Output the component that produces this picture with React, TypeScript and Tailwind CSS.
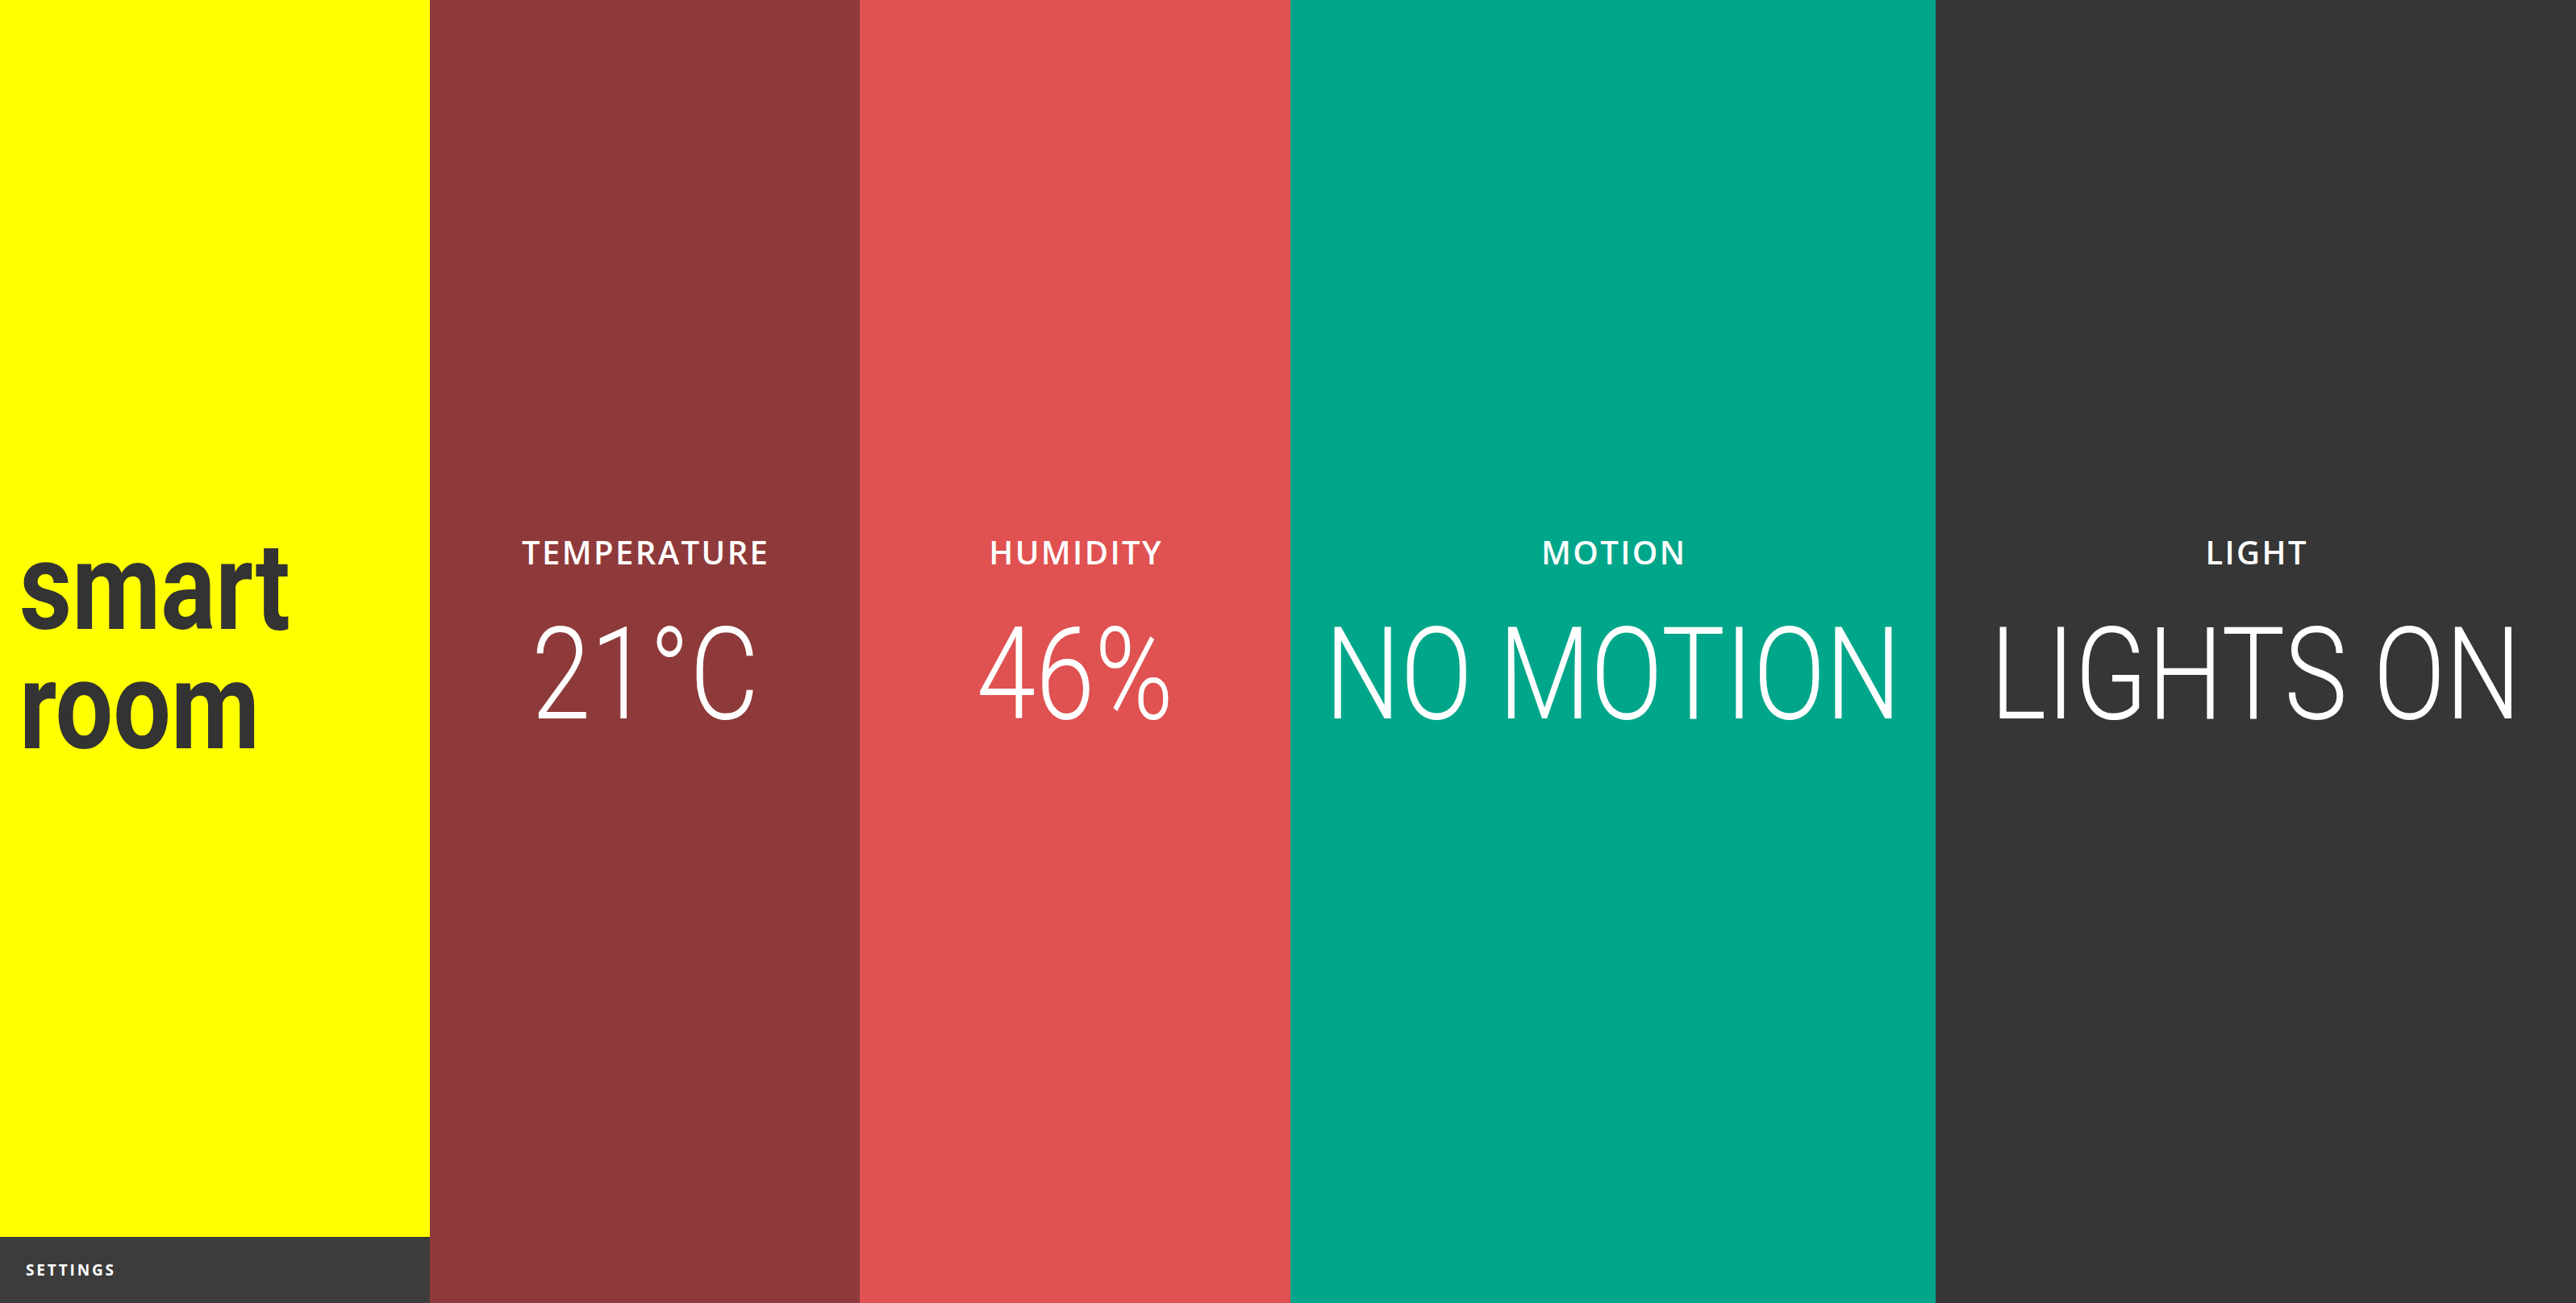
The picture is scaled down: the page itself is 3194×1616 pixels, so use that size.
import React from "react";

type Sensor = {
  label: string;
  value: string;
  width: string;
  bg: string;
};

const SENSORS: Sensor[] = [
  { label: "Temperature", value: "21°C", width: "w-[533px] shrink-0", bg: "bg-[#8e3a3a]" },
  { label: "Humidity", value: "46%", width: "w-[534px] shrink-0", bg: "bg-[#e05151]" },
  { label: "Motion", value: "NO MOTION", width: "w-[800px] shrink-0", bg: "bg-[#00a68a]" },
  { label: "Light", value: "LIGHTS ON", width: "min-w-0 flex-1", bg: "bg-[#363636]" },
];

function SensorColumn({ sensor }: { sensor: Sensor }) {
  return (
    <div className={`${sensor.width} ${sensor.bg} flex h-full flex-col items-center justify-center pb-[34px] text-white`}>
      <span className="pl-[0.06em] font-['Open_Sans',sans-serif] text-[40px] leading-[40px] font-semibold uppercase tracking-[0.06em]">
        {sensor.label}
      </span>
      <span className="mt-[52px] origin-center scale-x-[0.825] whitespace-nowrap font-['Roboto',sans-serif] text-[160px] leading-none font-light">
        {sensor.value}
      </span>
    </div>
  );
}

export default function App() {
  return (
    <div className="flex h-[1616px] w-full overflow-hidden">
      <div className="flex h-full w-[533px] shrink-0 flex-col bg-[#ffff00]">
        <div className="flex flex-1 flex-col justify-center pt-[70px] pl-[24px]">
          <h1 className="origin-left scale-x-[0.83] font-['Roboto',sans-serif] text-[153px] leading-[148px] font-bold text-[#333333]">
            smart
            <br />
            room
          </h1>
        </div>
        <div className="flex h-[82px] items-center bg-[#3c3c3c] px-[32px]">
          <span className="font-['Open_Sans',sans-serif] text-[19px] font-bold uppercase tracking-[0.15em] text-white">
            Settings
          </span>
        </div>
      </div>
      {SENSORS.map((s) => (
        <SensorColumn key={s.label} sensor={s} />
      ))}
    </div>
  );
}
